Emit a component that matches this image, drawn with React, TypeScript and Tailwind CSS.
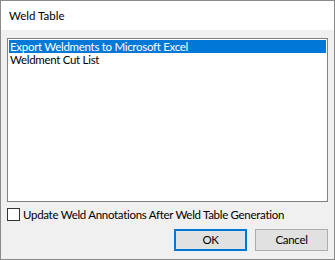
const items = ["Export Weldments to Microsoft Excel", "Weldment Cut List"];

export default function App() {
  const font = { fontFamily: 'Lato, "Liberation Sans", sans-serif' };
  return (
    <div
      className="w-[335px] h-[260px] border border-[#8a8a8a] flex flex-col text-[11.5px] tracking-[-0.3px] text-black bg-[#f0f0f0]"
      style={font}
    >
      <div className="h-[29px] bg-white flex items-center pl-[8px] pt-[1px] leading-none tracking-normal">Weld Table</div>
      <div className="flex-1 flex flex-col px-[6px] pt-[8px]">
        <div className="h-[164px] border border-[#828282] bg-white p-[1px]">
          {items.map((item, i) => (
            <div
              key={item}
              className={
                i === 0
                  ? "h-[13px] leading-[13px] pl-[1px] bg-[#0078d7] text-white whitespace-nowrap"
                  : "h-[13px] leading-[13px] pl-[1px] whitespace-nowrap"
              }
            >
              {item}
            </div>
          ))}
        </div>
        <label className="flex items-center mt-[6px] h-[13px]">
          <span className="w-[13px] h-[13px] border border-[#333] bg-white shrink-0" />
          <span className="ml-[3px] leading-none whitespace-nowrap">Update Weld Annotations After Weld Table Generation</span>
        </label>
        <div className="flex justify-end gap-[8px] mt-[8px]">
          <button className="w-[73px] h-[22px] border-2 border-[#0078d7] bg-[#e1e1e1] leading-none">OK</button>
          <button className="w-[73px] h-[22px] border border-[#adadad] bg-[#e1e1e1] leading-none">Cancel</button>
        </div>
      </div>
    </div>
  );
}
